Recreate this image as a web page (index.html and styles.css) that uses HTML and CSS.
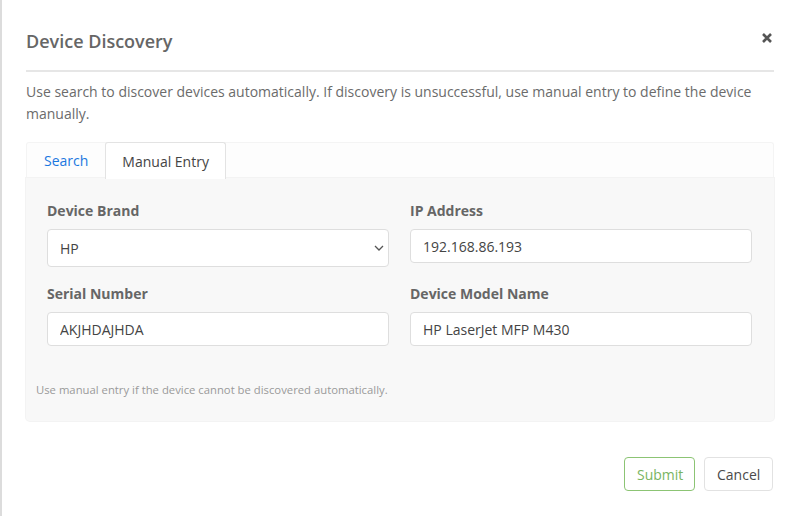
FILE: index.html
```html
<!DOCTYPE html>
<html lang="en">
<head>
<meta charset="utf-8">
<title>Device Discovery</title>
<link rel="stylesheet" href="styles.css">
</head>
<body>
<div class="modal">
  <div class="modal-header">
    <h1 class="modal-title">Device Discovery</h1>
    <button class="close" type="button" aria-label="Close">
      <svg width="12" height="12" viewBox="0 0 12 12"><path d="M2 2 L10 10 M10 2 L2 10" stroke="#555" stroke-width="2.6" stroke-linecap="butt"/></svg>
    </button>
  </div>
  <p class="intro">Use search to discover devices automatically. If discovery is unsuccessful, use manual entry to define the device manually.</p>
  <div class="tabs">
    <a class="tab tab-link" href="#">Search</a>
    <span class="tab tab-active">Manual Entry</span>
  </div>
  <div class="panel">
    <div class="form-grid">
      <div class="field">
        <label class="label">Device Brand</label>
        <div class="select-wrap">
          <select class="control select"><option>HP</option></select>
          <svg class="chevron" width="10" height="6" viewBox="0 0 10 6"><path d="M1 1 L5 5 L9 1" fill="none" stroke="#555" stroke-width="1.3"/></svg>
        </div>
      </div>
      <div class="field">
        <label class="label">IP Address</label>
        <input class="control input" value="192.168.86.193">
      </div>
      <div class="field">
        <label class="label">Serial Number</label>
        <input class="control input" value="AKJHDAJHDA">
      </div>
      <div class="field">
        <label class="label">Device Model Name</label>
        <input class="control input" value="HP LaserJet MFP M430">
      </div>
    </div>
    <p class="help">Use manual entry if the device cannot be discovered automatically.</p>
  </div>
  <div class="footer">
    <button class="btn btn-submit" type="button">Submit</button>
    <button class="btn btn-cancel" type="button">Cancel</button>
  </div>
</div>
</body>
</html>
```
FILE: styles.css
```css
html, body {
  margin: 0;
  padding: 0;
  background: #fff;
}
body {
  font-family: "Open Sans", "Noto Sans", sans-serif;
  color: #666;
  width: 798px;
  height: 516px;
  overflow: hidden;
}
.modal {
  box-sizing: border-box;
  height: 516px;
  border-left: 2px solid #dcdcdc;
  padding: 0 24px 0 24px;
}
.modal-header {
  display: flex;
  align-items: center;
  justify-content: space-between;
  box-sizing: border-box;
  height: 72px;
  padding-top: 10px;
  border-bottom: 2px solid #e6e6e6;
}
.modal-title {
  margin: 0;
  font-size: 18px;
  font-weight: 600;
  color: #666;
  line-height: 24px;
  padding-top: 1px;
}
.close {
  border: 0;
  background: none;
  padding: 0;
  margin-right: 1px;
  margin-bottom: 4px;
  display: flex;
  cursor: pointer;
}
.intro {
  margin: 9px 0 0 0;
  font-size: 14px;
  line-height: 22px;
  color: #6b6b6b;
}
.tabs {
  margin-top: 17px;
  display: flex;
  height: 36px;
  background: #fdfdfd;
  border: 1px solid #f4f4f4;
  border-bottom: 0;
  box-sizing: border-box;
  border-radius: 3px 3px 0 0;
}
.tab {
  display: flex;
  align-items: center;
  padding: 0 16px;
  font-size: 14px;
  height: 36px;
  box-sizing: border-box;
  margin-top: -1px;
  border: 1px solid transparent;
  border-bottom: 0;
}
.tab-link {
  color: #1b78e0;
  text-decoration: none;
}
.tab-active {
  color: #444;
  background: #fff;
  border-color: #e3e3e3;
  border-radius: 3px 3px 0 0;
  height: 37px;
}
.panel {
  background: #f8f8f8;
  padding: 23px 22px 23px 10px;
  border-radius: 0 0 4px 4px;
  box-shadow: 0 0 0 1px #f3f3f3;
}
.form-grid {
  margin-left: 11px;
  display: grid;
  grid-template-columns: 1fr 1fr;
  column-gap: 21px;
  row-gap: 17px;
  align-items: start;
}
.field {
  display: flex;
  flex-direction: column;
}
.label {
  font-size: 14px;
  font-weight: 700;
  line-height: 20px;
  color: #666;
  margin-bottom: 8px;
}
.control {
  box-sizing: border-box;
  width: 100%;
  border: 1px solid #dedede;
  border-radius: 4px;
  background: #fff;
  font-family: "Open Sans", "Noto Sans", sans-serif;
  font-size: 14px;
  color: #444;
  padding: 0 12px;
  margin: 0;
  outline: none;
}
.input {
  height: 34px;
}
.select-wrap {
  position: relative;
}
.select {
  height: 38px;
  appearance: none;
  -webkit-appearance: none;
}
.chevron {
  position: absolute;
  right: 5px;
  top: 16px;
}
.help {
  margin: 36px 0 0 0;
  font-size: 11.3px;
  line-height: 16px;
  color: #9a9a9a;
}
.footer {
  display: flex;
  justify-content: flex-end;
  gap: 9px;
  margin-top: 36px;
  padding-right: 1px;
}
.btn {
  height: 34px;
  box-sizing: border-box;
  background: #fff;
  border-radius: 4px;
  font-family: "Open Sans", "Noto Sans", sans-serif;
  font-size: 14px;
  padding: 0 12px;
  cursor: pointer;
}
.btn-submit {
  border: 1px solid #8cc474;
  color: #79b561;
  width: 71px;
}
.btn-cancel {
  border: 1px solid #e2e2e2;
  color: #4a4a4a;
  width: 69px;
}
```
